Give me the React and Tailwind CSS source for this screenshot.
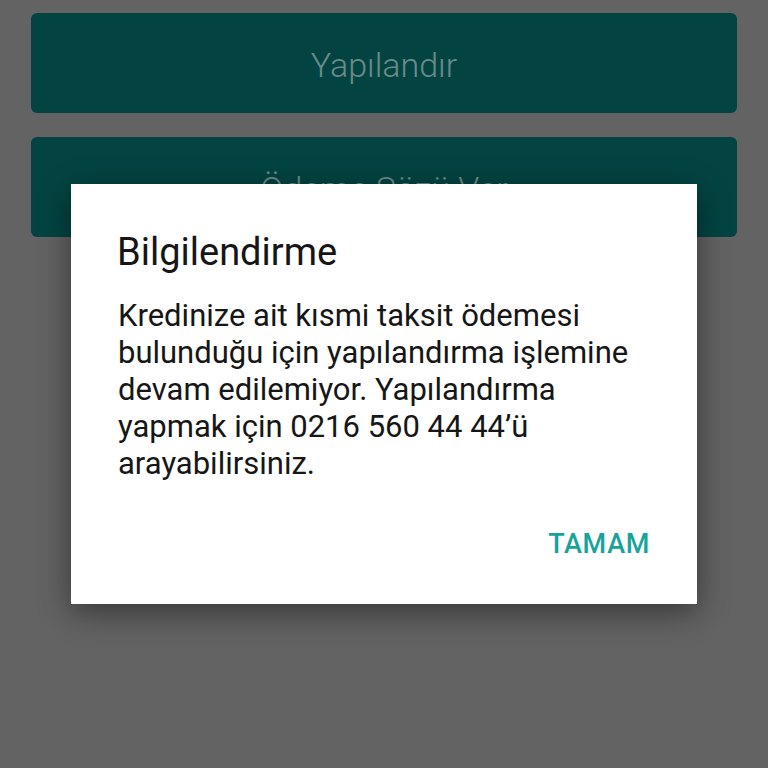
import React from 'react';

const App = () => {
    return (
        <div className="relative w-[768px] h-[768px] overflow-hidden bg-[#636363]" style={{ fontFamily: 'Roboto, "Noto Sans", sans-serif' }}>
            <div className="flex flex-col gap-6 px-[31px] pt-[13px]">
                <div className="h-[100px] rounded-md bg-[#034442] flex items-center justify-center pt-1 text-[34px] font-light text-[#6a8b89]">
                    Yapılandır
                </div>
                <div className="h-[100px] rounded-md bg-[#034442] flex items-center justify-center pt-1 text-[34px] font-light text-[#6a8b89]">
                    Ödeme Sözü Ver
                </div>
            </div>

            <div className="absolute left-[71px] top-[184px] w-[626px] h-[420px] bg-white shadow-[0_8px_30px_rgba(0,0,0,0.45)] flex flex-col">
                <h2 className="pl-[46px] pt-[46px] text-[38px] leading-[44px] text-[#161616]">Bilgilendirme</h2>
                <p className="pl-[47px] mt-[23px] text-[31px] leading-[37px] whitespace-nowrap text-[#161616]">
                    Kredinize ait kısmi taksit ödemesi<br />
                    bulunduğu için yapılandırma işlemine<br />
                    devam edilemiyor. Yapılandırma<br />
                    yapmak için 0216 560 44 44’ü<br />
                    arayabilirsiniz.
                </p>
                <div className="flex justify-end pr-[47px] mt-auto mb-[44px]">
                    <button className="text-[27px] leading-[32px] font-medium tracking-wide text-[#17a39c]">TAMAM</button>
                </div>
            </div>
        </div>
    );
};

export default App;
